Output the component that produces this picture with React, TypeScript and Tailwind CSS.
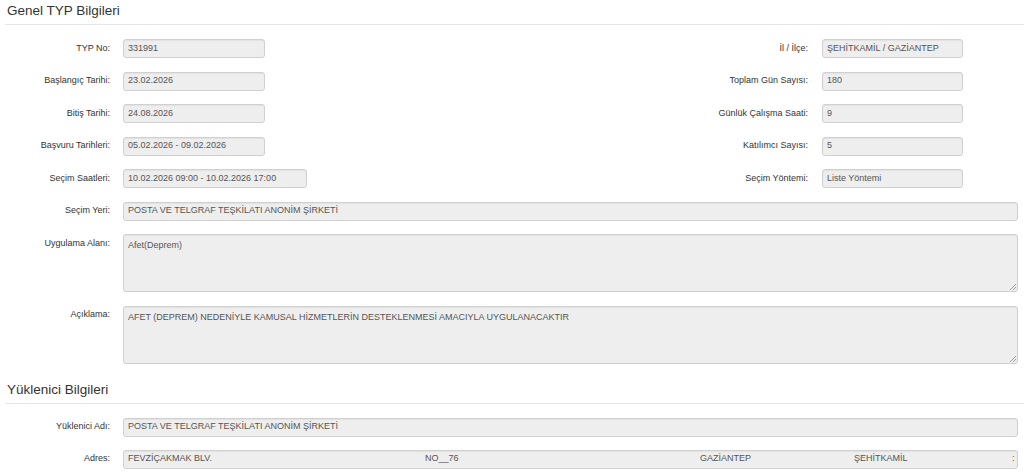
import React from 'react';

const Field: React.FC<{ value: string; className?: string }> = ({ value, className = '' }) => (
  <div
    className={`h-[19px] bg-[#eeeeee] border border-[#d0d0d0] rounded-[3px] pl-[4px] flex items-center text-[9px] text-[#555] whitespace-nowrap overflow-hidden shadow-[inset_0_1px_1px_rgba(0,0,0,0.05)] ${className}`}
  >
    {value}
  </div>
);

const Label: React.FC<{ text: string; className?: string }> = ({ text, className = 'w-[110px]' }) => (
  <div className={`h-[19px] flex items-center justify-end text-[9px] text-[#333] shrink-0 ${className}`}>{text}</div>
);

const Area: React.FC<{ value: string }> = ({ value }) => (
  <div className="relative ml-[13px] w-[895px] h-[58px] bg-[#eeeeee] border border-[#d0d0d0] rounded-[3px] pl-[4px] pt-[4px] text-[9px] text-[#555] shadow-[inset_0_1px_1px_rgba(0,0,0,0.05)]">
    {value}
    <svg className="absolute right-[1px] bottom-[1px]" width="7" height="7" viewBox="0 0 7 7">
      <path d="M7 1 L1 7 M7 4 L4 7" stroke="#888" strokeWidth="0.8" />
    </svg>
  </div>
);

const Heading: React.FC<{ text: string }> = ({ text }) => (
  <h3 className="text-[13.5px] leading-[16px] text-[#333] pl-[2px] pt-[3px] pb-[5px] border-b border-[#e6e6e6]">{text}</h3>
);

const pairs = [
  ['TYP No:', '331991', 'İl / İlçe:', 'ŞEHİTKAMİL / GAZİANTEP'],
  ['Başlangıç Tarihi:', '23.02.2026', 'Toplam Gün Sayısı:', '180'],
  ['Bitiş Tarihi:', '24.08.2026', 'Günlük Çalışma Saati:', '9'],
  ['Başvuru Tarihleri:', '05.02.2026 - 09.02.2026', 'Katılımcı Sayısı:', '5'],
  ['Seçim Saatleri:', '10.02.2026 09:00 - 10.02.2026 17:00', 'Seçim Yöntemi:', 'Liste Yöntemi'],
];

export default function App() {
  return (
    <div className="w-[1024px] h-[474px] overflow-hidden bg-white pl-[5px] font-['Liberation_Sans',Arial,sans-serif]">
      <Heading text="Genel TYP Bilgileri" />
      <div className="mt-[14px] flex flex-col gap-[13.5px] -ml-[5px]">
        {pairs.map(([l1, v1, l2, v2], i) => (
          <div key={l1} className="flex">
            <div className="w-[512px] flex">
              <Label text={l1} />
              <Field value={v1} className={i === 4 ? 'ml-[13px] w-[184px]' : 'ml-[13px] w-[142px]'} />
            </div>
            <div className="flex">
              <Label text={l2} className="w-[296px]" />
              <Field value={v2} className="ml-[14px] w-[141px]" />
            </div>
          </div>
        ))}
        <div className="flex">
          <Label text="Seçim Yeri:" />
          <Field value="POSTA VE TELGRAF TEŞKİLATI ANONİM ŞİRKETİ" className="ml-[13px] w-[895px]" />
        </div>
        <div className="flex items-start">
          <Label text="Uygulama Alanı:" />
          <Area value="Afet(Deprem)" />
        </div>
        <div className="flex items-start">
          <Label text="Açıklama:" />
          <Area value="AFET (DEPREM) NEDENİYLE KAMUSAL HİZMETLERİN DESTEKLENMESİ AMACIYLA UYGULANACAKTIR" />
        </div>
      </div>

      <div className="mt-[15px]">
        <Heading text="Yüklenici Bilgileri" />
      </div>
      <div className="mt-[14px] flex flex-col gap-[13px] -ml-[5px]">
        <div className="flex">
          <Label text="Yüklenici Adı:" />
          <Field value="POSTA VE TELGRAF TEŞKİLATI ANONİM ŞİRKETİ" className="ml-[13px] w-[895px]" />
        </div>
        <div className="flex">
          <Label text="Adres:" />
          <div className="ml-[13px] w-[895px] h-[19px] bg-[#eeeeee] border border-[#d0d0d0] rounded-[3px] pl-[4px] flex items-center text-[9px] text-[#555] whitespace-nowrap overflow-hidden shadow-[inset_0_1px_1px_rgba(0,0,0,0.05)]">
            <span className="w-[297px] shrink-0">FEVZİÇAKMAK BLV.</span>
            <span className="w-[275px] shrink-0">NO__76</span>
            <span className="w-[154px] shrink-0">GAZİANTEP</span>
            <span className="w-[158px] shrink-0">ŞEHİTKAMİL</span>
            <span className="shrink-0">:</span>
          </div>
        </div>
      </div>
    </div>
  );
}
